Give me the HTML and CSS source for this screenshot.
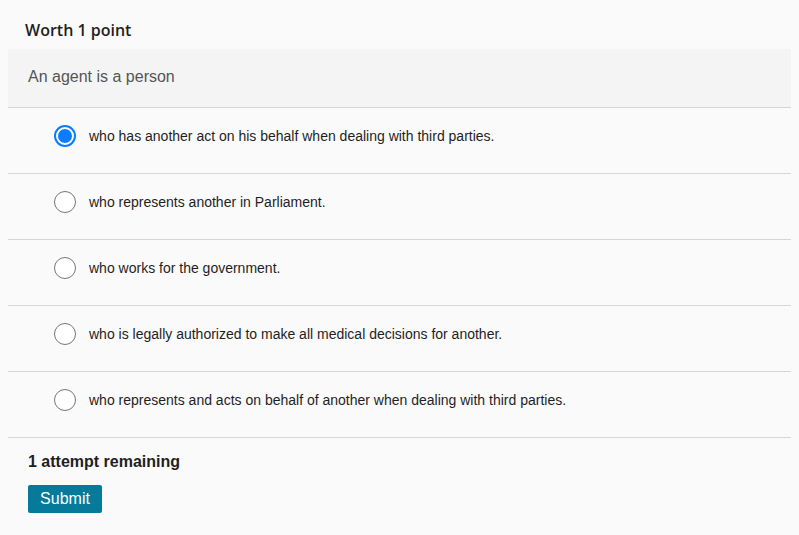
FILE: index.html
```html
<!DOCTYPE html>
<html>
<head>
<meta charset="utf-8">
<link rel="stylesheet" href="styles.css">
</head>
<body>
<div class="quiz">
  <div class="worth">Worth 1 point</div>
  <div class="question">An agent is a person</div>
  <div class="options">
    <label class="option"><span class="radio checked"></span><span class="opt-text">who has another act on his behalf when dealing with third parties.</span></label>
    <label class="option"><span class="radio"></span><span class="opt-text">who represents another in Parliament.</span></label>
    <label class="option"><span class="radio"></span><span class="opt-text">who works for the government.</span></label>
    <label class="option"><span class="radio"></span><span class="opt-text">who is legally authorized to make all medical decisions for another.</span></label>
    <label class="option"><span class="radio"></span><span class="opt-text">who represents and acts on behalf of another when dealing with third parties.</span></label>
  </div>
  <div class="footer">
    <div class="attempts">1 attempt remaining</div>
    <button class="submit">Submit</button>
  </div>
</div>
</body>
</html>
```
FILE: styles.css
```css
html, body {
  margin: 0;
  padding: 0;
  background: #fafafa;
}
.quiz {
  display: flex;
  flex-direction: column;
  font-family: "Liberation Sans", Arial, sans-serif;
}
.worth {
  font-family: "Open Sans", sans-serif;
  font-weight: 600;
  font-size: 16px;
  color: #1f1f1f;
  height: 49px;
  box-sizing: border-box;
  padding: 19px 0 0 25px;
  line-height: 22px;
}
.question {
  margin: 0 8px;
  background: #f4f4f4;
  height: 59px;
  box-sizing: border-box;
  border-bottom: 1px solid #d6d6d6;
  padding: 18px 0 0 20px;
  font-size: 16px;
  line-height: 20px;
  color: #555555;
}
.options {
  display: flex;
  flex-direction: column;
  margin: 0 8px;
}
.option {
  display: flex;
  align-items: center;
  height: 66px;
  box-sizing: border-box;
  padding: 0 0 10px 46px;
  border-bottom: 1px solid #d6d6d6;
  font-size: 14px;
  color: #1f1f1f;
  gap: 13px;
}
.radio {
  width: 22px;
  height: 22px;
  box-sizing: border-box;
  border-radius: 50%;
  border: 1.5px solid #767676;
  background: #ffffff;
  flex: none;
  position: relative;
}
.radio.checked {
  border: 2px solid #0a7cff;
}
.radio.checked::after {
  content: "";
  position: absolute;
  left: 2px;
  top: 2px;
  width: 14px;
  height: 14px;
  border-radius: 50%;
  background: #0a7cff;
}
.footer {
  display: flex;
  flex-direction: column;
  align-items: flex-start;
  padding: 14px 0 0 28px;
}
.attempts {
  font-weight: 700;
  font-size: 16px;
  line-height: 20px;
  color: #1f1f1f;
}
.submit {
  margin-top: 13px;
  width: 74px;
  height: 28px;
  border: none;
  border-radius: 2px;
  background: #067a9a;
  color: #ffffff;
  font-family: "Liberation Sans", Arial, sans-serif;
  font-size: 16px;
  padding: 0;
}
```
